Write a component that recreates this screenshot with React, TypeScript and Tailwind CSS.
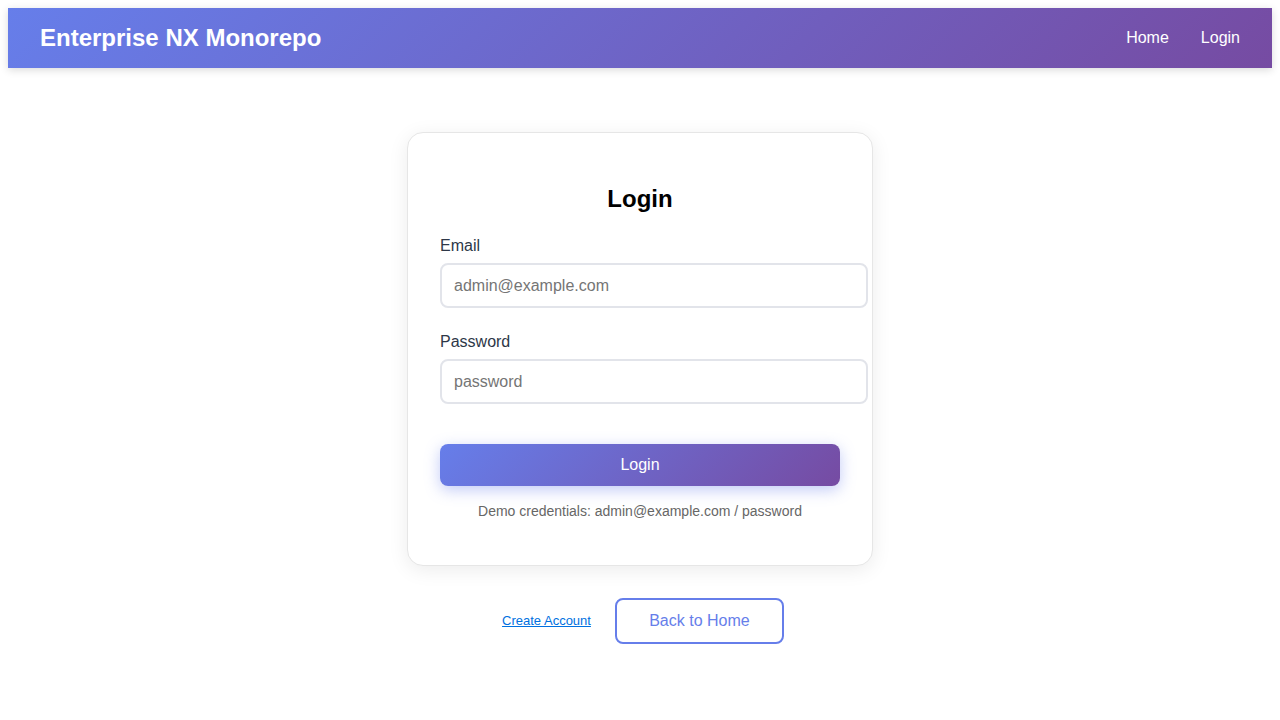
import React from "react";

export default function App() {
  return (
    <div className="min-h-screen bg-white p-2 font-['Liberation_Sans',Arial,sans-serif]">
      {/* header */}
      <header className="h-[60px] px-8 flex items-center justify-between bg-[linear-gradient(135deg,#667eea_0%,#764ba2_100%)] shadow-[0_2px_8px_rgba(0,0,0,0.15)]">
        <h1 className="text-white text-2xl font-bold">Enterprise NX Monorepo</h1>
        <nav className="flex items-center gap-8 text-white text-base">
          <a href="#">Home</a>
          <a href="#">Login</a>
        </nav>
      </header>

      {/* login card */}
      <main className="flex flex-col items-center pt-16">
        <div className="w-[466px] border border-[#e6e6e6] rounded-2xl bg-white px-8 pt-8 pb-8 shadow-[0_4px_20px_rgba(0,0,0,0.08)]">
          <h2 className="mt-5 mb-6 text-center text-2xl font-bold text-black leading-7">Login</h2>

          <div className="mb-[25px]">
            <label className="block mb-2 text-base text-[#2d3748] leading-[18px]">Email</label>
            <input
              type="email"
              placeholder="admin@example.com"
              className="w-[428px] h-[45px] px-3 border-2 border-[#e2e4ea] rounded-lg text-base text-[#333] placeholder:text-[#757575] outline-none"
            />
          </div>

          <div className="mb-6">
            <label className="block mb-2 text-base text-[#2d3748] leading-[18px]">Password</label>
            <input
              type="password"
              placeholder="password"
              className="w-[428px] h-[45px] px-3 border-2 border-[#e2e4ea] rounded-lg text-base text-[#333] placeholder:text-[#757575] outline-none"
            />
          </div>

          <button className="mt-4 w-full h-[42px] rounded-lg text-white text-base bg-[linear-gradient(135deg,#667eea_0%,#764ba2_100%)] shadow-[0_4px_15px_rgba(102,126,234,0.4)]">
            Login
          </button>

          <p className="mt-[17px] mb-[14px] text-center text-sm leading-4 text-[#666]">
            Demo credentials: admin@example.com / password
          </p>
        </div>

        {/* links */}
        <div className="mt-8 flex items-center gap-6 pl-[6px]">
          <a href="#" className="text-[13px] text-[#0070e0] underline">
            Create Account
          </a>
          <button className="h-[46px] w-[169px] border-2 border-[#667eea] rounded-lg text-base text-[#667eea] bg-white">
            Back to Home
          </button>
        </div>
      </main>
    </div>
  );
}
